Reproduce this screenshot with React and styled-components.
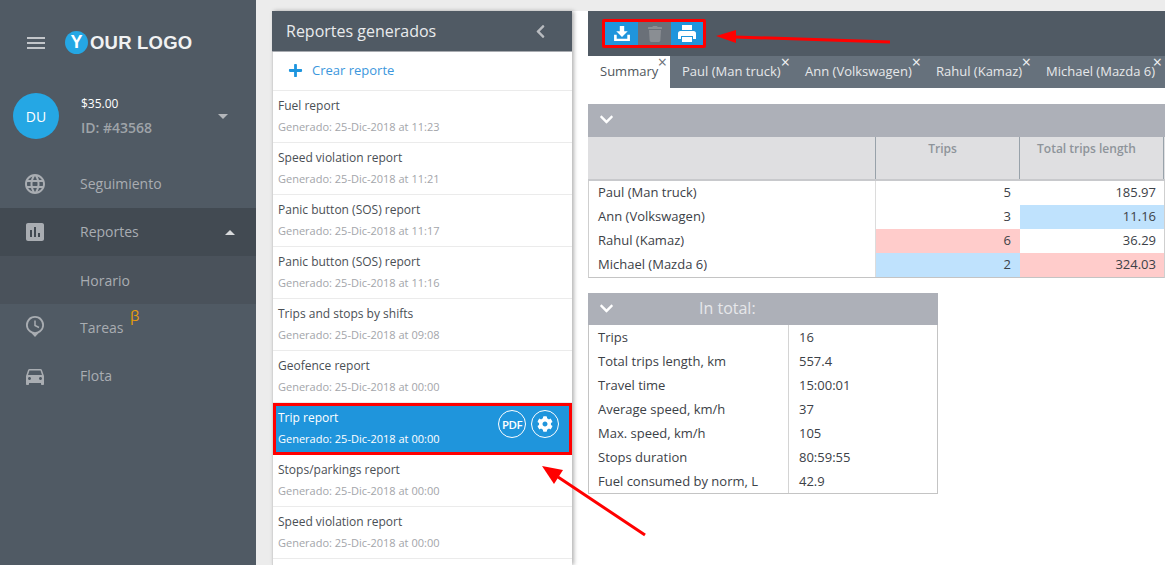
import React from "react";
import styled, { createGlobalStyle } from "styled-components";
import { FaCog, FaPlus, FaTrash, FaChevronLeft, FaChevronDown } from "react-icons/fa";
import { MdAssessment, MdDirectionsCar, MdLanguage } from "react-icons/md";

const GlobalStyle = createGlobalStyle`
  html, body { margin: 0; padding: 0; height: 100%; overflow: hidden; }
  body { font-family: "Open Sans", "Liberation Sans", sans-serif; background: #ececec; }
  * { box-sizing: border-box; }
`;

const Page = styled.div`
  position: relative;
  display: flex;
  width: 1165px;
  height: 565px;
  overflow: hidden;
`;

const Sidebar = styled.aside`
  flex: 0 0 256px;
  background: #505a64;
`;

const Brand = styled.div`
  display: flex;
  align-items: center;
  height: 78px;
  padding: 7px 0 0 27px;
`;

const Burger = styled.div`
  display: flex;
  flex-direction: column;
  gap: 3px;
  width: 18px;
  margin-right: 20px;
  & > span { display: block; height: 2px; background: #c3c6ca; }
`;

const LogoMark = styled.div`
  display: flex;
  align-items: center;
  justify-content: center;
  width: 23px;
  height: 23px;
  border-radius: 50%;
  background: #25a7e4;
  color: #fff;
  font: bold 18px "Liberation Sans", sans-serif;
`;

const LogoText = styled.div`
  margin-left: 2px;
  color: #f1f2f3;
  font: bold 18.5px "Liberation Sans", sans-serif;
  letter-spacing: 0.2px;
`;

const UserBox = styled.div`
  display: flex;
  align-items: center;
  height: 82px;
  padding: 0 0 6px 13px;
`;

const Avatar = styled.div`
  display: flex;
  align-items: center;
  justify-content: center;
  flex: 0 0 46px;
  height: 46px;
  border-radius: 50%;
  background: #25a7e4;
  color: #fff;
  font-size: 14px;
`;

const UserInfo = styled.div`
  flex: 1;
  padding-left: 22px;
`;

const Balance = styled.div`
  color: #fff;
  font-size: 12px;
  line-height: 25px;
`;

const UserId = styled.div`
  padding-bottom: 2px;
  color: #9fa4a9;
  font-size: 14px;
  font-weight: 600;
  line-height: 23px;
`;

const Caret = styled.div`
  width: 0;
  height: 0;
  margin-right: ${(p) => p.$mr}px;
  border-left: 5px solid transparent;
  border-right: 5px solid transparent;
  ${(p) => (p.$up ? "border-bottom: 5px solid #d8dadc;" : "border-top: 5px solid #b4b7bb;")}
`;

const NavRow = styled.div`
  display: flex;
  align-items: center;
  height: 48px;
  color: #a9adb2;
  font-size: 14px;
  background: ${(p) => (p.$active ? "#424a52" : p.$sub ? "#4a525b" : "transparent")};
  padding-left: ${(p) => (p.$sub ? "80px" : "0")};
`;

const NavIcon = styled.div`
  display: flex;
  justify-content: center;
  flex: 0 0 80px;
  padding-right: 10px;
  color: #a9adb2;
  font-size: 24px;
  margin-top: ${(p) => p.$mt || 0}px;
  svg { display: block; }
`;

const NavLabel = styled.div`
  position: relative;
  flex: 1;
  padding-bottom: 2px;
`;

const Beta = styled.span`
  position: absolute;
  left: 50px;
  top: -13px;
  color: #e89c0c;
  font-size: 15px;
`;

const ListPanel = styled.section`
  display: flex;
  flex-direction: column;
  flex: 0 0 300px;
  margin: 11px 0 0 16px;
  background: #fff;
  border-left: 1px solid #d4d4d4;
  box-shadow: 2px 0 4px rgba(0, 0, 0, 0.3);
  z-index: 1;
`;

const PanelHeader = styled.header`
  display: flex;
  align-items: center;
  justify-content: space-between;
  height: 41px;
  margin-left: -1px;
  padding: 0 24px 0 14px;
  background: #505a64;
  border-bottom: 1px solid #a8abb0;
  color: #e9ebed;
  font-size: 16px;
  svg { color: #b9bcc0; font-size: 15px; display: block; }
`;

const CreateRow = styled.div`
  display: flex;
  align-items: center;
  gap: 9px;
  height: 39px;
  padding: 0 0 2px 15px;
  border-bottom: 1px solid #ebebeb;
  color: #3c97dd;
  font-size: 13px;
  svg { color: #1e95de; font-size: 15px; display: block; }
`;

const ReportItem = styled.div`
  display: flex;
  align-items: center;
  justify-content: space-between;
  height: 52px;
  padding: 0 13px 2px 5px;
  background: ${(p) => (p.$selected ? "#1f95dc" : "#fff")};
  border-bottom: 1px solid #ebebeb;
  ${(p) => p.$selected && "outline: 3px solid #f00; outline-offset: -3px; border-bottom: 0;"}
`;

const ReportTitle = styled.div`
  padding-top: 2px;
  color: ${(p) => (p.$selected ? "#fff" : "#4a4f55")};
  font-size: 12px;
  line-height: 20px;
`;

const ReportDate = styled.div`
  color: ${(p) => (p.$selected ? "#fff" : "#a3a5aa")};
  font-size: 11px;
  line-height: 22px;
`;

const RoundActions = styled.div`
  display: flex;
  gap: 5px;
  margin-bottom: 8px;
`;

const RoundButton = styled.div`
  display: flex;
  align-items: center;
  justify-content: center;
  width: 28px;
  height: 28px;
  border: 1px solid #fff;
  border-radius: 50%;
  color: #fff;
  font-size: ${(p) => p.$fs}px;
  font-weight: 600;
  letter-spacing: -0.5px;
  svg { display: block; }
`;

const Content = styled.main`
  flex: 1;
  display: flex;
  flex-direction: column;
  margin-top: 11px;
  padding-left: 16px;
  background: #fff;
`;

const TopBar = styled.div`
  display: flex;
  align-items: center;
  height: 45px;
  padding-left: 14px;
  background: #505a64;
`;

const ToolGroup = styled.div`
  display: flex;
  height: 29px;
  border: 3px solid #f00;
  border-radius: 2px;
`;

const ToolButton = styled.div`
  display: flex;
  align-items: center;
  justify-content: center;
  width: ${(p) => p.$w}px;
  background: ${(p) => (p.$muted ? "#6a7078" : "#1f95dc")};
  color: ${(p) => (p.$muted ? "#8a8e93" : "#fff")};
  font-size: 16px;
  svg { display: block; }
`;

const Tabs = styled.div`
  display: flex;
  height: 32px;
  background: #66717c;
`;

const Tab = styled.div`
  position: relative;
  display: flex;
  align-items: center;
  width: ${(p) => p.$w}px;
  padding: 0 0 2px 12px;
  background: ${(p) => (p.$active ? "#fff" : "transparent")};
  color: ${(p) => (p.$active ? "#50565c" : "#e6e8ea")};
  font-size: 13px;
  white-space: nowrap;
`;

const TabClose = styled.span`
  position: absolute;
  top: 0;
  right: 3px;
  color: ${(p) => (p.$active ? "#6a7078" : "#f2f3f4")};
  font-size: 16px;
  line-height: 13px;
`;

const SectionBar = styled.div`
  display: flex;
  align-items: center;
  height: ${(p) => p.$h}px;
  width: ${(p) => p.$w || "auto"};
  margin-top: ${(p) => p.$mt}px;
  padding: 0 0 2px 11px;
  background: #adb0b8;
  color: #fff;
  svg { display: block; font-size: 15px; }
`;

const BarTitle = styled.span`
  margin-left: 85px;
  color: #e6e7ea;
  font-size: 16px;
`;

const HeadRow = styled.div`
  display: grid;
  grid-template-columns: 288px 144px 144px 1px;
  height: 44px;
  background: #dfdfe1;
  border-bottom: 2px solid #c8c9cc;
`;

const HeadCell = styled.div`
  padding: 3px 10px 0 0;
  text-align: center;
  color: #8e949a;
  font-size: 12px;
  font-weight: 600;
  border-right: 1px solid #98a2aa;
`;

const SummaryBody = styled.div`
  border-left: 1px solid #cfcfcf;
  border-bottom: 1px solid #c4c4c4;
  border-right: 1px solid #cfcfcf;
`;

const SummaryRow = styled.div`
  display: grid;
  grid-template-columns: 287px 144px 144px;
  height: 24px;
`;

const NameCell = styled.div`
  padding-left: 9px;
  color: #3c4147;
  font-size: 13px;
  line-height: 22px;
  border-right: 1px solid #dcdcdc;
`;

const NumCell = styled.div`
  padding-right: ${(p) => p.$pr}px;
  text-align: right;
  color: #3c4147;
  font-size: 13px;
  line-height: 22px;
  background: ${(p) => (p.$tone === "red" ? "#ffcccb" : p.$tone === "blue" ? "#bfe2fd" : "transparent")};
`;

const TotalBody = styled.div`
  width: 350px;
  border: 1px solid #c4c4c4;
  border-top: 0;
`;

const TotalRow = styled.div`
  display: grid;
  grid-template-columns: 200px 1fr;
  height: 24px;
  line-height: 24px;
  font-size: 13px;
  color: #3c4147;
`;

const TotalLabel = styled.div`
  padding-left: 9px;
  border-right: 1px solid #d4d4d4;
`;

const TotalValue = styled.div`
  padding-left: 10px;
`;

const Annotations = styled.svg`
  position: absolute;
  left: 0;
  top: 0;
  z-index: 2;
  pointer-events: none;
`;

const ClockPin = () => (
  <svg width="20" height="24" viewBox="0 0 20 24" fill="none">
    <path d="M10 23 L6.500 19.2 A9 9 0 1 1 13.500 19.2 Z" fill="#a9adb2" />
    <circle cx="10" cy="11" r="7.2" fill="#505a64" />
    <path d="M10 6.500 V11.500 L14 13.500" stroke="#a9adb2" strokeWidth="1.500" fill="none" />
  </svg>
);

const DownloadIcon = () => (
  <svg width="16" height="15" viewBox="0 0 18 17" fill="#fff">
    <path d="M6.500 0h5v6h4L9 12.500 2.500 6h4z" />
    <path d="M0 10h3v4.500h12V10h3v7H0z" />
  </svg>
);

const PrinterIcon = () => (
  <svg width="18" height="17" viewBox="0 0 18 17" fill="#fff">
    <path d="M4 0h10v5H4z" />
    <path d="M2.500 6h13A2.500 2.500 0 0 1 18 8.500V14h-3v-3H3v3H0V8.500A2.500 2.500 0 0 1 2.500 6z" />
    <path d="M4 12h10v5H4z" />
  </svg>
);

const reports = [
  ["Fuel report", "11:23"],
  ["Speed violation report", "11:21"],
  ["Panic button (SOS) report", "11:17"],
  ["Panic button (SOS) report", "11:16"],
  ["Trips and stops by shifts", "09:08"],
  ["Geofence report", "00:00"],
  ["Trip report", "00:00", true],
  ["Stops/parkings report", "00:00"],
  ["Speed violation report", "00:00"],
];

const tabs = [
  ["Summary", 82, true],
  ["Paul (Man truck)", 123],
  ["Ann (Volkswagen)", 131],
  ["Rahul (Kamaz)", 110],
  ["Michael (Mazda 6)", 131],
];

const summary = [
  ["Paul (Man truck)", "5", null, "185.97", null],
  ["Ann (Volkswagen)", "3", null, "11.16", "blue"],
  ["Rahul (Kamaz)", "6", "red", "36.29", null],
  ["Michael (Mazda 6)", "2", "blue", "324.03", "red"],
];

const totals = [
  ["Trips", "16"],
  ["Total trips length, km", "557.4"],
  ["Travel time", "15:00:01"],
  ["Average speed, km/h", "37"],
  ["Max. speed, km/h", "105"],
  ["Stops duration", "80:59:55"],
  ["Fuel consumed by norm, L", "42.9"],
];

export default function App() {
  return (
    <Page>
      <GlobalStyle />
      <Sidebar>
        <Brand>
          <Burger>
            <span />
            <span />
            <span />
          </Burger>
          <LogoMark>Y</LogoMark>
          <LogoText>OUR LOGO</LogoText>
        </Brand>
        <UserBox>
          <Avatar>DU</Avatar>
          <UserInfo>
            <Balance>$35.00</Balance>
            <UserId>ID: #43568</UserId>
          </UserInfo>
          <Caret $mr={28} />
        </UserBox>
        <NavRow>
          <NavIcon>
            <MdLanguage />
          </NavIcon>
          <NavLabel>Seguimiento</NavLabel>
        </NavRow>
        <NavRow $active>
          <NavIcon>
            <MdAssessment />
          </NavIcon>
          <NavLabel>Reportes</NavLabel>
          <Caret $up $mr={21} />
        </NavRow>
        <NavRow $sub>Horario</NavRow>
        <NavRow>
          <NavIcon $mt={-4}>
            <ClockPin />
          </NavIcon>
          <NavLabel>
            Tareas<Beta>β</Beta>
          </NavLabel>
        </NavRow>
        <NavRow>
          <NavIcon>
            <MdDirectionsCar />
          </NavIcon>
          <NavLabel>Flota</NavLabel>
        </NavRow>
      </Sidebar>

      <ListPanel>
        <PanelHeader>
          Reportes generados
          <FaChevronLeft />
        </PanelHeader>
        <CreateRow>
          <FaPlus />
          Crear reporte
        </CreateRow>
        {reports.map(([title, time, selected], index) => (
          <ReportItem key={index} $selected={selected}>
            <div>
              <ReportTitle $selected={selected}>{title}</ReportTitle>
              <ReportDate $selected={selected}>Generado: 25-Dic-2018 at {time}</ReportDate>
            </div>
            {selected && (
              <RoundActions>
                <RoundButton $fs={11.5}>PDF</RoundButton>
                <RoundButton $fs={16}>
                  <FaCog />
                </RoundButton>
              </RoundActions>
            )}
          </ReportItem>
        ))}
      </ListPanel>

      <Content>
        <TopBar>
          <ToolGroup>
            <ToolButton $w={33}>
              <DownloadIcon />
            </ToolButton>
            <ToolButton $w={33} $muted>
              <FaTrash />
            </ToolButton>
            <ToolButton $w={32}>
              <PrinterIcon />
            </ToolButton>
          </ToolGroup>
        </TopBar>
        <Tabs>
          {tabs.map(([label, width, active]) => (
            <Tab key={label} $w={width} $active={active}>
              {label}
              <TabClose $active={active}>×</TabClose>
            </Tab>
          ))}
        </Tabs>
        <SectionBar $h={33} $mt={16}>
          <FaChevronDown />
        </SectionBar>
        <HeadRow>
          <HeadCell />
          <HeadCell>Trips</HeadCell>
          <HeadCell>Total trips length</HeadCell>
        </HeadRow>
        <SummaryBody>
          {summary.map(([name, trips, tripsTone, length, lengthTone]) => (
            <SummaryRow key={name}>
              <NameCell>{name}</NameCell>
              <NumCell $pr={9} $tone={tripsTone}>
                {trips}
              </NumCell>
              <NumCell $pr={8} $tone={lengthTone}>
                {length}
              </NumCell>
            </SummaryRow>
          ))}
        </SummaryBody>
        <SectionBar $h={32} $w="350px" $mt={15}>
          <FaChevronDown />
          <BarTitle>In total:</BarTitle>
        </SectionBar>
        <TotalBody>
          {totals.map(([label, value]) => (
            <TotalRow key={label}>
              <TotalLabel>{label}</TotalLabel>
              <TotalValue>{value}</TotalValue>
            </TotalRow>
          ))}
        </TotalBody>
      </Content>

      <Annotations width="1165" height="565" viewBox="0 0 1165 565">
        <path d="M890 42 L735 37" stroke="#f00" strokeWidth="3" />
        <path d="M716 36 L736 30 L736 43 Z" fill="#f00" />
        <path d="M645 535 L558 477" stroke="#f00" strokeWidth="3" />
        <path d="M542 466 L563 470 L554 484 Z" fill="#f00" />
      </Annotations>
    </Page>
  );
}
